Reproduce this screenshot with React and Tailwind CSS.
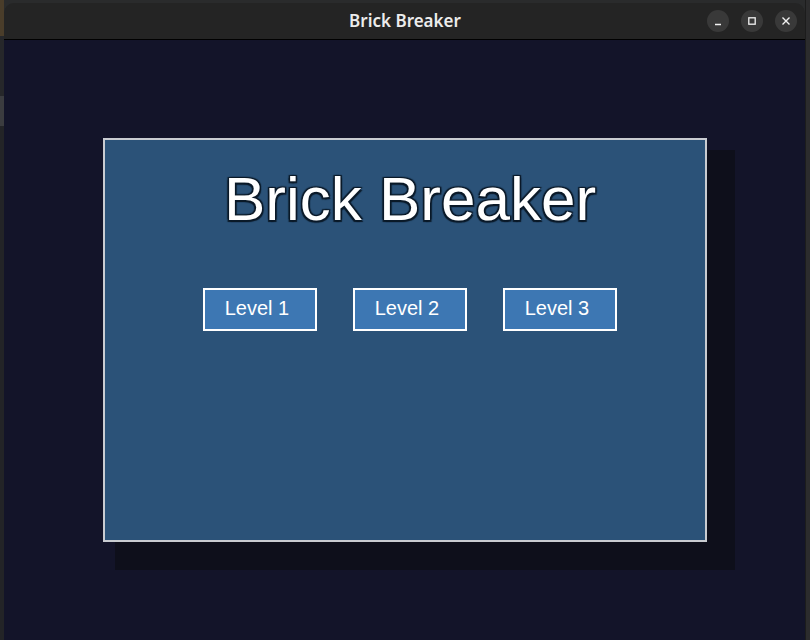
export default function App() {
  const levels = ["Level 1", "Level 2", "Level 3"];
  return (
    <div className="w-[810px] h-[640px] overflow-hidden flex bg-[#2a2b2c] font-['Liberation_Sans',Arial,sans-serif]">
      {/* desktop strip left */}
      <div className="w-[4px] h-full flex flex-col">
        <div className="h-[36px] bg-[#4a3d2a]" />
        <div className="h-[60px] bg-[#26272a]" />
        <div className="h-[30px] bg-[#3b3c3f]" />
        <div className="flex-1 bg-[#232427]" />
      </div>
      {/* window */}
      <div className="w-[801px] h-full pt-[3px] flex flex-col">
        <div className="flex-1 flex flex-col rounded-t-[10px] overflow-hidden">
          <div className="h-[37px] bg-[#242424] border-b border-black flex items-center relative">
            <div className="flex-1 text-center text-[#ececec] text-[17px] font-semibold font-['Noto_Sans',sans-serif] tracking-[0px] pl-[1px] pb-[1px]">
              Brick Breaker
            </div>
            <div className="absolute right-[8px] top-[7px] flex gap-[12px]">
              <div className="w-[22px] h-[22px] rounded-full bg-[#393939] flex items-center justify-center">
                <svg width="10" height="10" viewBox="0 0 10 10">
                  <path d="M2 8.5h6" stroke="#f2f2f2" strokeWidth="1.4" />
                </svg>
              </div>
              <div className="w-[22px] h-[22px] rounded-full bg-[#393939] flex items-center justify-center">
                <svg width="10" height="10" viewBox="0 0 10 10">
                  <rect x="1.8" y="1.8" width="6.4" height="6.4" fill="none" stroke="#f2f2f2" strokeWidth="1.3" />
                </svg>
              </div>
              <div className="w-[22px] h-[22px] rounded-full bg-[#393939] flex items-center justify-center">
                <svg width="10" height="10" viewBox="0 0 10 10">
                  <path d="M1.5 1.5l7 7M8.5 1.5l-7 7" stroke="#f2f2f2" strokeWidth="1.4" />
                </svg>
              </div>
            </div>
          </div>
          <div className="flex-1 bg-[#131429] pl-[99px] pt-[98px]">
            <div className="w-[604px] h-[404px] border-2 border-[#c9ccd1] bg-[#2b5278] shadow-[20px_20px_0_8px_#0e0f1b] flex flex-col items-center pl-[10px]">
              <div className="mt-[28px] text-[62px] leading-none text-white [text-shadow:_0_0_2px_#0b1a29,_1.5px_1.5px_1px_#0b1a29,_-1.5px_-1.5px_1px_#0b1a29,_1.5px_-1.5px_1px_#0b1a29,_-1.5px_1.5px_1px_#0b1a29]">
                Brick Breaker
              </div>
              <div className="mt-[58px] flex gap-[36px]">
                {levels.map((l) => (
                  <div
                    key={l}
                    className="w-[114px] h-[43px] border-2 border-white bg-[#3d77b3] text-white text-[20px] flex items-center justify-center pr-[6px] pb-[3px]"
                  >
                    {l}
                  </div>
                ))}
              </div>
            </div>
          </div>
        </div>
      </div>
      {/* desktop strip right */}
      <div className="flex-1 h-full bg-[#2c2c2d] border-l border-[#1c1c1c]" />
    </div>
  );
}
